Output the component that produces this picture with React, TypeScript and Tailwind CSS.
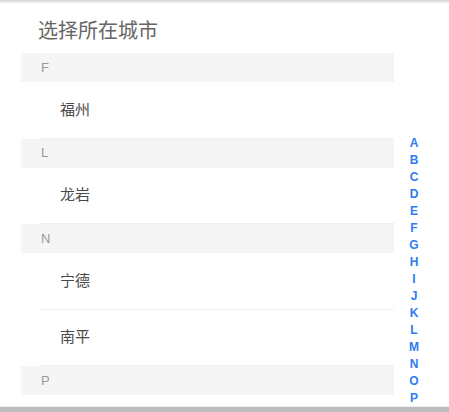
const sections = [
  { letter: "F", cities: ["福州"] },
  { letter: "L", cities: ["龙岩"] },
  { letter: "N", cities: ["宁德", "南平"] },
  { letter: "P", cities: [] as string[] },
];

const index = "ABCDEFGHIJKLMNOP".split("");

export default function App() {
  return (
    <div
      className="relative w-[449px] h-[412px] flex flex-col overflow-hidden bg-white"
      style={{ fontFamily: '"Liberation Sans", "Noto Sans CJK SC", sans-serif' }}
    >
      <div className="h-[3px] shrink-0 bg-gradient-to-b from-[#d6d6d6] to-[#f3f3f3]" />
      <div className="flex-1 overflow-hidden pl-[21px] pr-[55px]">
        <div className="h-[50px] pt-[16px] pl-[17px] text-[20px] leading-[24px] text-[#666]">
          选择所在城市
        </div>
        {sections.map((s) => (
          <div key={s.letter}>
            <div className="h-[29px] flex items-center pl-[20px] bg-[#f5f5f5] text-[13px] text-[#999]">
              {s.letter}
            </div>
            {s.cities.map((c) => (
              <div
                key={c}
                className="h-[56.5px] ml-[19px] pl-[20px] flex items-center border-b border-[#efefef] text-[15px] text-[#4a4a4a]"
              >
                {c}
              </div>
            ))}
          </div>
        ))}
      </div>
      <div className="h-[1px] shrink-0 bg-[#ececec]" />
      <div className="h-[5px] shrink-0 bg-[#bdbdbd]" />

      <div className="absolute left-[408px] top-[135px] flex flex-col w-[12px]">
        {index.map((l) => (
          <span key={l} className="h-[17px] leading-[17px] text-center text-[12px] font-bold text-[#2f7cf0]">
            {l}
          </span>
        ))}
      </div>
    </div>
  );
}
